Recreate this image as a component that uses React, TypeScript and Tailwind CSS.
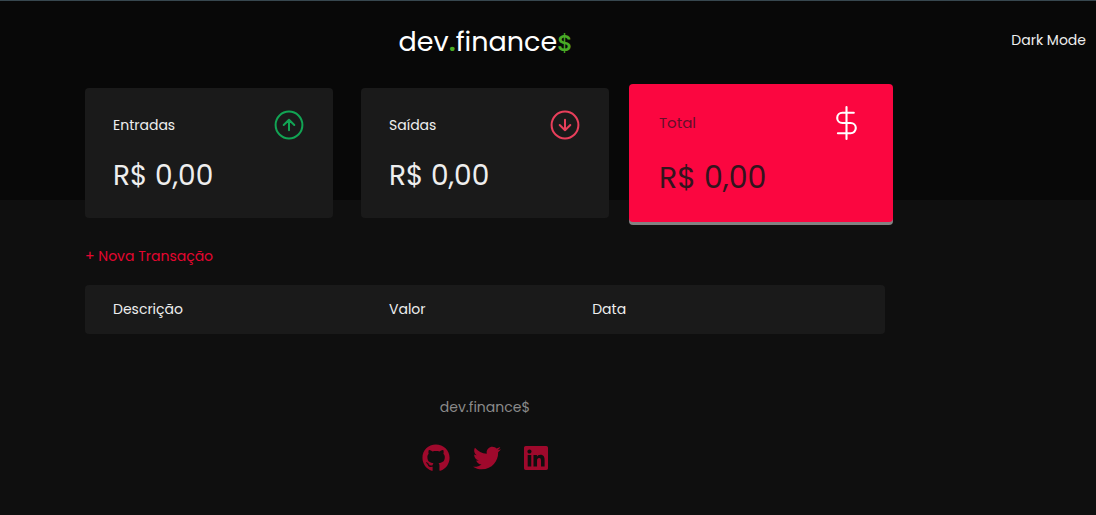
import type { ReactNode } from "react";
import { FaGithub, FaLinkedin, FaTwitter } from "react-icons/fa";

function ArrowCircle({ direction }: { direction: "up" | "down" }) {
  return (
    <svg viewBox="0 0 32 32" className="size-8" fill="none" stroke="currentColor" strokeWidth="2" strokeLinecap="round" strokeLinejoin="round" aria-hidden="true">
      <circle cx="16" cy="16" r="13.4" />
      {direction === "up" ? <path d="M16 21.3V10.7M10.7 16L16 10.7L21.3 16" /> : <path d="M16 10.7V21.3M10.7 16L16 21.3L21.3 16" />}
    </svg>
  );
}

function DollarIcon() {
  return (
    <svg viewBox="0 0 36 36" className="size-9" fill="none" stroke="currentColor" strokeWidth="2.1" strokeLinecap="round" strokeLinejoin="round" aria-hidden="true">
      <path d="M17.5 2V34M24.8 7.8H13.3A5.1 5.1 0 0 0 13.3 18H21.7A5.1 5.1 0 0 1 21.7 28.2H8.9" />
    </svg>
  );
}

function Card({ title, icon }: { title: string; icon: ReactNode }) {
  return (
    <section className="h-[130px] rounded-[4px] bg-[#1a1a1a] px-7 pt-5 text-[#eeeeee]">
      <div className="flex h-[34px] items-center justify-between">
        <h2 className="text-[14px] leading-6">{title}</h2>
        {icon}
      </div>
      <p className="mt-[14px] text-[28px] leading-10">R$ 0,00</p>
    </section>
  );
}

export default function App() {
  return (
    <div className="min-h-screen bg-[#0f0f0f] font-['Poppins','Inter',sans-serif] text-[#eeeeee]">
      <div className="h-[200px] border-t border-[#37474f] bg-[#080808]">
        <header className="grid grid-cols-[minmax(0,1fr)_126px] pt-5">
          <h1 className="text-center text-[27px] leading-[42px] text-white">
            dev<span className="font-semibold text-[#49aa26]">.</span>finance<span className="font-['Inter',sans-serif] text-[22px] font-semibold text-[#49aa26]">$</span>
          </h1>
          <button type="button" className="self-start pr-2.5 text-right text-[14px] leading-[38px]">Dark Mode</button>
        </header>
      </div>
      <div className="mr-[126px]">
        <main className="relative mx-auto -mt-28 max-w-[800px]">
          <div className="grid grid-cols-3 gap-7">
            <Card title="Entradas" icon={<span className="text-[#12a454]"><ArrowCircle direction="up" /></span>} />
            <Card title="Saídas" icon={<span className="text-[#e83f5b]"><ArrowCircle direction="down" /></span>} />
            <section className="-mx-2 -my-1 h-[138px] rounded-[4px] bg-[#fb0640] pt-5 pr-7 pl-[30px] text-[#1a1a1a] shadow-[0_3px_0_#828282]">
              <div className="flex h-[38px] items-center justify-between">
                <h2 className="text-[15px] leading-6 text-[#63102a]">Total</h2>
                <span className="text-white"><DollarIcon /></span>
              </div>
              <p className="mt-[13px] text-[30px] leading-[46px] text-[#33141d]">R$ 0,00</p>
            </section>
          </div>
          <button type="button" className="mt-[26px] block text-[14px] leading-6 text-[#e4062f]">+ Nova Transação</button>
          <table className="mt-[17px] w-full table-fixed overflow-hidden rounded-[4px] bg-[#1a1a1a] text-left text-[14px] leading-6">
            <thead>
              <tr className="h-[49px]">
                <th scope="col" className="w-[34.5%] pb-0.5 pl-7 font-normal">Descrição</th>
                <th scope="col" className="w-[25.4%] pb-0.5 pl-7 font-normal">Valor</th>
                <th scope="col" className="pb-0.5 pl-7 font-normal">Data</th>
              </tr>
            </thead>
          </table>
        </main>
        <footer className="pt-[61px] text-center">
          <p className="text-[14px] leading-6 text-[#8a8a8a]">dev.finance$</p>
          <div className="mt-[25px] flex items-center justify-center gap-[23px] text-[28px] text-[#9f092c]">
            <a href="#github" aria-label="GitHub"><FaGithub /></a>
            <a href="#twitter" aria-label="Twitter"><FaTwitter /></a>
            <a href="#linkedin" aria-label="LinkedIn"><FaLinkedin className="w-6" /></a>
          </div>
        </footer>
      </div>
    </div>
  );
}
